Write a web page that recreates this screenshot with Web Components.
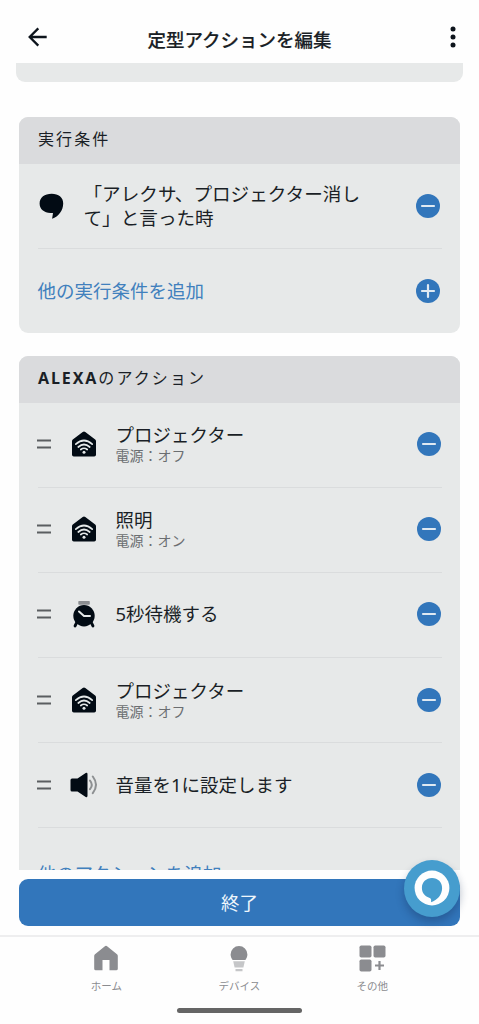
<!DOCTYPE html>
<html lang="ja">
<head>
<meta charset="utf-8">
<title>定型アクションを編集</title>
<style>
html,body{margin:0;height:100%;background:#fefefe;overflow:hidden}
body{font-family:"Noto Sans","Noto Sans CJK JP",sans-serif;color:#1a1f26}
</style>
</head>
<body>
<routine-screen></routine-screen>
<script>
const define=(name,html)=>customElements.define(name,class extends HTMLElement{
  constructor(){
    super();
    const t=document.createElement('template');
    t.innerHTML=html;
    this.attachShadow({mode:'open'}).append(t.content.cloneNode(true));
  }
});

const icons={
  back:[24,24,'<path d="M20.700 12H4M12.300 3.400 3.700 12l8.600 8.600" fill="none" stroke="#0d141c" stroke-width="2.300"/>'],
  more:[6,24,'<g fill="#0d141c"><circle cx="3" cy="4" r="2.500"/><circle cx="3" cy="12" r="2.500"/><circle cx="3" cy="20" r="2.500"/></g>'],
  speech:[26,28,'<path d="M13.700 1.700C20.500 1.700 25.200 5.300 25.200 11.400c0 7-4.500 12.900-11.100 15.300l.9-5.700-2.500-.1C6 20.600 1.600 17 1.600 11.400c0-6 5-9.700 12.100-9.700z" fill="#020b14"/>'],
  minus:[24,24,'<circle cx="12" cy="12" r="12" fill="#3276bb"/><path d="M6 12h12" stroke="#dfe9f2" stroke-width="2.200" stroke-linecap="round"/>'],
  plus:[24,24,'<circle cx="12" cy="12" r="12" fill="#3276bb"/><path d="M6 12h12M12 6v12" stroke="#dfe9f2" stroke-width="2.200" stroke-linecap="round"/>'],
  drag:[14,10,'<path d="M0 1.400h14M0 8.600h14" stroke="#5b5e61" stroke-width="2"/>'],
  house:[26,28,'<path d="M11.700 1.900q1.300-1 2.600 0L24.200 9.600q.8.600.8 1.600v13.500q0 1.800-1.800 1.800H2.800Q1 26.500 1 24.700V11.200q0-1 .8-1.600z" fill="#020b14"/><g fill="none" stroke="#e4e8e8" stroke-width="1.700" stroke-linecap="round"><path d="M4.800 14.200Q13 6.800 21.200 14.200"/><path d="M7.300 17Q13 12 18.700 17"/><path d="M9.800 19.500q3.200-2.500 6.400 0"/></g><circle cx="13" cy="22.300" r="1.500" fill="#e4e8e8"/>'],
  clock:[26,28,'<rect x="7.300" y="1" width="11.500" height="3.800" rx=".8" fill="#8a8d91"/><circle cx="13" cy="15.700" r="10.700" fill="#020b14"/><path d="M5.500 23 4 26M20.500 23l1.500 3" stroke="#020b14" stroke-width="2.800" stroke-linecap="round"/><path d="m8 11.500 5 4.500h6" fill="none" stroke="#e4e8e8" stroke-width="2" stroke-linecap="round" stroke-linejoin="round"/>'],
  volume:[28,26,'<path d="M2 6.500h5.500L15.700 1q1.800-.8 1.800 1.200v21.600q0 2-1.800 1.200L7.500 19.500H2Q.500 19.500.500 18V8Q.500 6.500 2 6.500z" fill="#020b14"/><g fill="none" stroke="#8d9092" stroke-width="2" stroke-linecap="round"><path d="M20 8.600q3.600 4.300 0 8.600M22.800 4.500q6.400 8.300 0 16.600"/></g>'],
  home:[24,26,'<path d="M10.600 1.400q1.400-1.100 2.800 0L23 9.300q.8.700.8 1.800v12.600q0 1.600-1.600 1.600H15.500V15H8.500v10.300H1.800Q.200 25.300.200 23.700V11.100q0-1.100.8-1.800z" fill="#8b8c90"/>'],
  bulb:[18,28,'<path d="M9 1a8.400 8.400 0 0 1 8.400 8.400c0 2.200-.9 4-2 5.500H2.600C1.500 13.400.6 11.600.6 9.400A8.400 8.400 0 0 1 9 1z" fill="#8b8c90"/><path d="M3.200 16.300h11.600l-1.400 6.200H4.600zM5.500 24h7v2.300h-7z" fill="#c5c6c8"/>'],
  grid:[27,27,'<g fill="#8b8c90"><rect x=".500" y=".500" width="12" height="12" rx="1.800"/><rect x="14.500" y=".500" width="12" height="12" rx="1.800"/><rect x=".500" y="14.500" width="12" height="12" rx="1.800"/></g><path d="M20.500 16v9M16 20.500h9" stroke="#8b8c90" stroke-width="2.200"/>'],
  alexa:[36,36,'<circle cx="18" cy="18" r="17.400" fill="#fefefe"/><path d="M18 8c6 0 10.100 4.300 10.100 9.900 0 7-4.700 11.900-11 14.400v-2.600q0-1.400-1.300-1.800C11 26.400 7.900 22.800 7.900 17.900 7.900 12.300 12.100 8 18 8z" fill="#469dce"/>']
};
customElements.define('app-icon',class extends HTMLElement{
  constructor(){super();this.attachShadow({mode:'open'});}
  connectedCallback(){
    const [w,h,p]=icons[this.getAttribute('name')];
    this.shadowRoot.innerHTML=`<style>:host{display:block;flex:none}svg{display:block}</style><svg width="${w}" height="${h}" viewBox="0 0 ${w} ${h}">${p}</svg>`;
  }
});

define('title-bar',`<style>
:host{display:grid;grid-template-columns:60px 1fr 60px;height:63px;flex:none;box-sizing:border-box;padding-top:12px;background:#fefefe}
.b{padding:13px 0 0 26px}
.m{padding-top:13px;justify-self:end;width:29px}
h1{margin:0;font-size:18.500px;font-weight:500;line-height:28px;padding-top:13.500px;text-align:center;-webkit-text-stroke:.15px currentColor}
</style><div class="b"><app-icon name="back"></app-icon></div><h1><slot></slot></h1><div class="m"><app-icon name="more"></app-icon></div>`);

define('routine-card',`<style>
:host{display:block;margin:0 19px 23.600px;background:#e7e9e9;border-radius:9px;overflow:hidden}
header{height:46.500px;box-sizing:border-box;padding:0 19px;background:#dadbdd;font-size:16px;letter-spacing:2.100px;line-height:45px}
.body{padding:0 18.500px}
</style><header><slot name="head"></slot></header><div class="body"><slot></slot></div>`);

define('condition-row',`<style>
:host{display:flex;align-items:center;height:85px;box-sizing:border-box;border-bottom:1px solid #dadcdd;padding-right:2px;font-size:18.600px;line-height:24px}
.t{flex:1;margin:1px 0 0 20px}
</style><app-icon name="speech"></app-icon><div class="t"><slot></slot></div><app-icon name="minus"></app-icon>`);

define('add-row',`<style>
:host{display:flex;align-items:center;justify-content:space-between;height:84px;padding-right:2px;font-size:18.500px;line-height:28px;color:#4180bd}
span{padding-top:var(--label-drop,1px)}
</style><span><slot></slot></span><slot name="icon"></slot>`);

customElements.define('action-row',class extends HTMLElement{
  constructor(){super();this.attachShadow({mode:'open'});}
  connectedCallback(){
    this.shadowRoot.innerHTML=`<style>
:host{display:flex;align-items:center;height:85.100px;box-sizing:border-box;border-bottom:1px solid #dadcdd;padding:0 1px .8px 0}
app-icon[name=drag]{margin-left:-.5px}
.i{width:28px;margin:0 17.500px 0 19px;display:grid;place-items:center;flex:none}
.t{flex:1;font-size:18.500px;line-height:24px}
::slotted(small){display:block;font-size:14px;line-height:18px;color:#6b6e71}
</style><app-icon name="drag"></app-icon><div class="i"><app-icon name="${this.getAttribute('icon')}"></app-icon></div><div class="t"><slot></slot></div><app-icon name="minus"></app-icon>`;
  }
});

define('done-bar',`<style>
:host{display:block;flex:none;height:65.500px;box-sizing:border-box;padding:9.500px 19px 0;position:relative;background:#fefefe}
button{display:block;width:100%;height:46.500px;border:0;border-radius:9px;background:#3276bb;color:#eef6fc;font:inherit;font-size:18.500px;line-height:46px;padding:1px 0 0}
.fab{position:absolute;right:19px;top:-10px;width:56px;height:57px;border-radius:50%;background:#469dce;display:grid;place-items:center;box-shadow:0 5px 9px rgba(20,40,80,.32)}
</style><button><slot></slot></button><div class="fab"><app-icon name="alexa"></app-icon></div>`);

define('tab-bar',`<style>
:host{display:block;flex:none;height:89px;box-sizing:border-box;border-top:2px solid #eeeeef;background:#fefefe}
nav{display:grid;grid-template-columns:repeat(3,133px);justify-content:center;margin-right:.4px;height:70.500px}
.bar{width:125px;height:5px;border-radius:3px;background:#656565;margin:0 auto}
</style><nav><slot></slot></nav><div class="bar"></div>`);

customElements.define('tab-item',class extends HTMLElement{
  constructor(){super();this.attachShadow({mode:'open'});}
  connectedCallback(){
    this.shadowRoot.innerHTML=`<style>:host{display:flex;flex-direction:column;align-items:center;font-size:10.500px;line-height:16px;color:#8b8c90}
.i{height:40.500px;padding-top:7.500px;box-sizing:border-box}</style><div class="i"><app-icon name="${this.getAttribute('icon')}"></app-icon></div><span><slot></slot></span>`;
  }
});

define('routine-screen',`<style>
:host{display:flex;flex-direction:column;width:479px;height:1024px;background:#fefefe}
main{flex:1;min-height:0;overflow:hidden}
.prev{height:19px;margin:0 16.500px 35px 16px;background:#e7e9e9;border-radius:0 0 9px 9px}
.latin{font-weight:700;letter-spacing:1.900px}
.last{--label-drop:7px}
</style>
<title-bar>定型アクションを編集</title-bar>
<main>
<div class="prev"></div>
<routine-card><span slot="head">実行条件</span>
<condition-row>「アレクサ、プロジェクター消し<br>て」と言った時</condition-row>
<add-row>他の実行条件を追加<app-icon slot="icon" name="plus"></app-icon></add-row>
</routine-card>
<routine-card><span slot="head"><span class="latin">ALEXA</span>のアクション</span>
<action-row icon="house">プロジェクター<small>電源：オフ</small></action-row>
<action-row icon="house">照明<small>電源：オン</small></action-row>
<action-row icon="clock">5秒待機する</action-row>
<action-row icon="house">プロジェクター<small>電源：オフ</small></action-row>
<action-row icon="volume">音量を1に設定します</action-row>
<add-row class="last">他のアクションを追加</add-row>
</routine-card>
</main>
<done-bar>終了</done-bar>
<tab-bar><tab-item icon="home">ホーム</tab-item><tab-item icon="bulb">デバイス</tab-item><tab-item icon="grid">その他</tab-item></tab-bar>
`);
</script>
</body>
</html>
